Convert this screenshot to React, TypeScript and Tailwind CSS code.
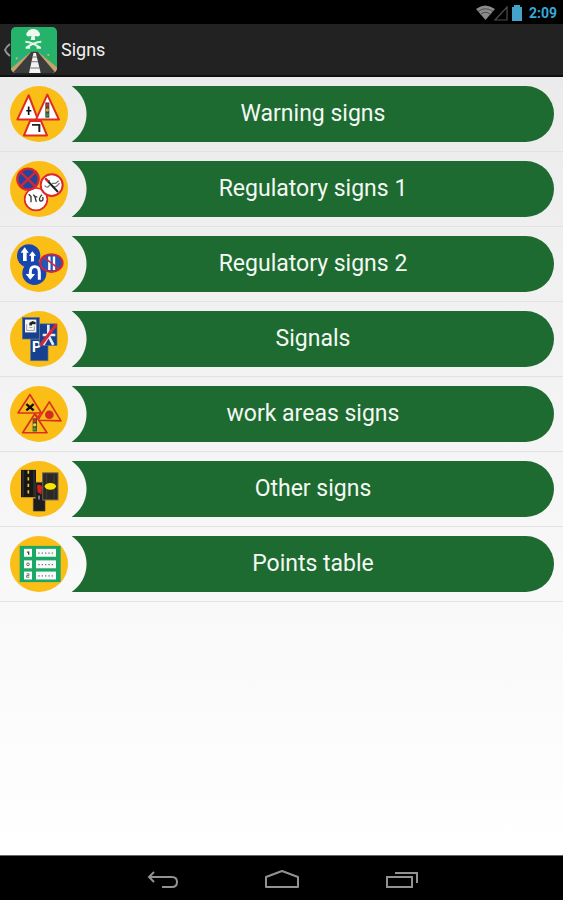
import type { ReactNode } from "react";

const WarningIcon = () => (
  <g transform="translate(0 4)">
    {[
      "M84 58 L112 132 H50 Z",
      "M140 56 L175 132 H106 Z",
      "M88 136 H121 L139 180 H70 Z",
    ].map((d) => (
      <path
        key={d}
        d={d}
        fill="#fff"
        stroke="#df2b22"
        strokeWidth="6"
        strokeLinejoin="round"
      />
    ))}
    <path d="M84 92 V118 M77 105 H92" stroke="#111" strokeWidth="5" />
    <rect x="134" y="80" width="12" height="46" fill="#444" />
    <circle cx="140" cy="88" r="5" fill="#d9281f" />
    <circle cx="140" cy="103" r="5" fill="#e8a32a" />
    <circle cx="140" cy="118" r="5" fill="#2d9447" />
    <path d="M94 148 H116 V170" fill="none" stroke="#222" strokeWidth="6" />
  </g>
);

const RegulatoryOneIcon = () => (
  <>
    <circle cx="106" cy="150" r="34" fill="#fff" stroke="#e3262b" strokeWidth="5" />
    <path
      d="M84 135 L91 142 V159 M98 136 L103 143 H110 M102 139 L107 158 M124 136 Q112 149 119 156 Q130 156 126 143"
      fill="none"
      stroke="#333"
      strokeWidth="4"
    />
    <circle cx="82" cy="89" r="32" fill="#25459b" stroke="#d92632" strokeWidth="7" />
    <path d="M60 68 L104 111 M104 68 L60 111" stroke="#d92632" strokeWidth="7" />
    <circle cx="153" cy="107" r="33" fill="#fff" stroke="#e3262b" strokeWidth="6" />
    <path
      d="M132 109 Q140 119 147 107 M154 102 H165 L174 94 M155 112 Q169 115 176 101 M139 94 H148"
      fill="none"
      stroke="#777"
      strokeWidth="4"
    />
    <path d="M134 87 L172 128" stroke="#222" strokeWidth="6" />
    <path d="M134 87 L143 97" stroke="#e3262b" strokeWidth="6" />
  </>
);

const RegulatoryTwoIcon = () => (
  <>
    <circle cx="84" cy="94" r="35" fill="#1746ae" />
    <path d="M72 68 L84 85 H78 V110 H67 V85 H60 Z" fill="#fff" />
    <path d="M95 80 L106 94 H100 V113 H91 V94 H85 Z" fill="#fff" />
    <circle cx="101" cy="147" r="36" fill="#1746ae" />
    <path
      d="M116 167 V145 Q116 127 102 127 Q89 127 89 145 V150"
      fill="none"
      stroke="#fff"
      strokeWidth="9"
    />
    <path d="M75 149 H103 L89 167 Z" fill="#fff" />
    <ellipse cx="152" cy="116" rx="34" ry="27" fill="#2856b5" stroke="#d72335" strokeWidth="6" />
    <path d="M146 96 V137 M160 96 V137" stroke="#fff" strokeWidth="7" />
    <path d="M129 98 L175 134" stroke="#d72335" strokeWidth="5" />
  </>
);

const SignalsIcon = () => (
  <>
    <rect x="90" y="119" width="52" height="66" fill="#17408e" stroke="#5c7695" strokeWidth="2" />
    <text
      x="94"
      y="159"
      fill="#fff"
      fontSize="42"
      fontWeight="700"
      fontFamily="Roboto, sans-serif"
    >
      P
    </text>
    <rect x="117" y="73" width="52" height="66" fill="#17408e" stroke="#5c7695" strokeWidth="2" />
    <path d="M143 76 V110 L128 137 M144 110 L158 137 M126 107 H164" fill="none" stroke="#e8edf4" strokeWidth="8" />
    <path d="M167 75 L120 138" stroke="#dc2637" strokeWidth="9" />
    <rect x="65" y="54" width="51" height="65" fill="#17408e" stroke="#5c7695" strokeWidth="2" />
    <rect x="73" y="60" width="34" height="39" fill="#f4f4f4" />
    <path d="M86 70 L96 64 L105 68 V74 H94 V78 H86 Z" fill="#222" />
    <path d="M78 74 V93 H101 V80 M86 84 H95" fill="none" stroke="#777" strokeWidth="2" />
  </>
);

const WorkAreasIcon = () => (
  <>
    {[
      "M88 60 L122 116 H52 Z",
      "M146 82 L181 140 L111 138 Z",
      "M102 119 L139 176 H66 Z",
    ].map((d) => (
      <path
        key={d}
        d={d}
        fill="#f5bc1c"
        stroke="#d9301d"
        strokeWidth="5"
        strokeLinejoin="round"
      />
    ))}
    <path d="M77 89 L99 108 M99 89 L77 108" stroke="#111" strokeWidth="7" />
    <circle cx="146" cy="121" r="13" fill="#d52b20" />
    <rect x="96" y="132" width="13" height="40" fill="#4c4a2b" />
    <circle cx="102" cy="139" r="5" fill="#d9301d" />
    <circle cx="102" cy="152" r="5" fill="#f2d13a" />
    <circle cx="102" cy="165" r="5" fill="#3c9c3f" />
    <path d="M103 119 L113 128 L119 114" fill="none" stroke="#d9301d" strokeWidth="4" />
  </>
);

const OtherIcon = () => (
  <>
    <path d="M61 61 H106 V144 H61 Z" fill="#161616" />
    <path d="M83 63 V142" stroke="#f4c02c" strokeWidth="5" strokeDasharray="10 10" />
    <path d="M67 63 V142 M100 63 V142" stroke="#55575a" strokeWidth="2" />
    <path d="M105 99 H128 V153 H133 V186 H98 V148 H105 Z" fill="#1d1d1f" stroke="#4c4740" strokeWidth="2" />
    <rect x="126" y="70" width="46" height="82" fill="#2c2925" stroke="#67635c" strokeWidth="3" />
    <path d="M138 75 V147 M160 75 V147" stroke="#504b43" strokeWidth="2" />
    <ellipse cx="149" cy="111" rx="17" ry="10" fill="#f7e700" />
    <path d="M109 108 Q119 102 124 112 L122 136 L111 128 Z" fill="#df211d" />
    <path d="M115 139 V151" stroke="#d8d8d8" strokeWidth="3" />
  </>
);

const PointsIcon = () => (
  <>
    <rect x="57" y="64" width="123" height="110" fill="#1ba766" />
    {[73, 108, 142].map((y) => (
      <g key={y}>
        <rect x="70" y={y} width="24" height="24" fill="#f7faf8" />
        <rect x="106" y={y} width="60" height="24" fill="#f7faf8" />
        <path
          d={`M113 ${y + 13} H160`}
          stroke="#777"
          strokeWidth="4"
          strokeDasharray="4 6"
        />
      </g>
    ))}
    <path d="M79 83 H84 V91" fill="none" stroke="#444" strokeWidth="4" />
    <circle cx="82" cy="120" r="4" fill="none" stroke="#666" strokeWidth="3" />
    <path d="M78 149 H85 V154 H78 V159 H86" fill="none" stroke="#777" strokeWidth="3" />
  </>
);

const categories: { name: string; icon: ReactNode }[] = [
  { name: "Warning signs", icon: <WarningIcon /> },
  { name: "Regulatory signs 1", icon: <RegulatoryOneIcon /> },
  { name: "Regulatory signs 2", icon: <RegulatoryTwoIcon /> },
  { name: "Signals", icon: <SignalsIcon /> },
  { name: "work areas signs", icon: <WorkAreasIcon /> },
  { name: "Other signs", icon: <OtherIcon /> },
  { name: "Points table", icon: <PointsIcon /> },
];

const CategoryRow = ({ name, icon }: { name: string; icon: ReactNode }) => {
  return (
    <li className="flex items-center gap-1 border-b border-[#e2e2e2] py-[9px] pr-[9px] pl-[10px]">
      <svg
        viewBox="28 34 174 170"
        preserveAspectRatio="none"
        className="h-14 w-[58px] shrink-0"
        aria-hidden="true"
      >
        <ellipse cx="115" cy="119" rx="87" ry="85" fill="#fabe17" />
        {icon}
      </svg>
      <button
        type="button"
        className="h-14 flex-1 rounded-r-full bg-[radial-gradient(circle_at_-19px_50%,transparent_33px,#1d6b30_34px)] text-center text-[23px] text-[#f4f8f4]"
      >
        {name}
      </button>
    </li>
  );
};

const StatusBar = () => (
  <div className="flex h-6 items-center justify-end bg-black pt-px pr-[6px] text-[#35a9d8]">
    <svg viewBox="0 0 54 20" className="h-5 w-[54px]" aria-hidden="true">
      <path d="M1 6 Q10 -1 20 6 L10.500 17 Z" fill="#8b8b8b" />
      <path d="M3 8.500 Q10.500 3 18 8.500 M5.500 11.500 Q10.500 7 15.500 11.500" fill="none" stroke="#4b4b4b" strokeWidth="1" />
      <path d="M32 4 V17 H20 Z" fill="none" stroke="#4d4d4d" strokeWidth="1.200" />
      <path d="M39 2 H45 V4 H47 V18 H37 V4 H39 Z" fill="#43a3cb" />
    </svg>
    <time className="text-sm font-bold">2:09</time>
  </div>
);

const AppIcon = () => (
  <svg viewBox="0 0 135 135" className="size-[46px]" aria-hidden="true">
    <defs>
      <clipPath id="app-icon">
        <rect width="135" height="135" rx="14" />
      </clipPath>
    </defs>
    <g clipPath="url(#app-icon)">
      <rect width="135" height="135" fill="#25b36c" />
      <path d="M54 76 L0 122 V135 H135 V118 L84 76 Z" fill="#c8a16a" />
      <path d="M60 73 L5 135 H131 L78 73 Z" fill="#3d3c3d" />
      <path d="M66 76 H73 L87 135 H53 Z" fill="#f3f3f3" />
      <path d="M62 88 H77 M60 102 H79 M57 120 H83" stroke="#777" strokeWidth="3" />
      <g fill="#edf9ef">
        <ellipse cx="65" cy="17" rx="17" ry="11" />
        <circle cx="52" cy="21" r="7" />
        <circle cx="78" cy="21" r="7" />
        <path d="M61 23 H69 L71 38 H58 Z" />
      </g>
      <path
        d="M42 43 Q62 44 84 60 M89 43 Q68 44 46 60 M43 61 H56 M75 61 H88"
        fill="none"
        stroke="#e5f5e8"
        strokeWidth="6"
      />
      <path d="M18 97 H23 M28 84 H33 M98 71 H104" stroke="#438ee0" strokeWidth="6" />
      <path d="M14 92 H19 M107 82 H112" stroke="#e7c04e" strokeWidth="5" />
    </g>
  </svg>
);

const ActionBar = () => (
  <header className="flex h-[53px] items-center border-b-2 border-[#101010] bg-[#222] pl-1">
    <button type="button" aria-label="Navigate up" className="flex items-center">
      <svg viewBox="0 0 7 16" className="h-4 w-[7px]" aria-hidden="true">
        <path d="M6 2 Q2 5 1 8 Q2 11 6 14" fill="none" stroke="#949494" strokeWidth="2" />
      </svg>
      <AppIcon />
    </button>
    <h1 className="ml-1 pt-px text-lg text-[#f0f0f0]">Signs</h1>
  </header>
);

const NavigationBar = () => (
  <nav className="flex h-[45px] items-center justify-center gap-[86px] border-t border-[#666] bg-black pt-[3px]">
    <button type="button" aria-label="Back">
      <svg viewBox="0 0 34 20" className="h-5 w-[34px]" aria-hidden="true">
        <path
          d="M9 2 L4 7 L9 12 M4 7 H27 Q32 7 32 12 Q32 17 27 17 H17"
          fill="none"
          stroke="#929292"
          strokeWidth="2"
        />
      </svg>
    </button>
    <button type="button" aria-label="Home">
      <svg viewBox="0 0 34 20" className="h-5 w-[34px]" aria-hidden="true">
        <path
          d="M1 17 V7 L17 1 L33 7 V17 Z"
          fill="none"
          stroke="#929292"
          strokeWidth="2"
          strokeLinejoin="round"
        />
      </svg>
    </button>
    <button type="button" aria-label="Recent apps">
      <svg viewBox="0 0 34 20" className="h-5 w-[34px]" aria-hidden="true">
        <path
          d="M2 7 H27 V17 H2 Z M10 3 H32 V13"
          fill="none"
          stroke="#929292"
          strokeWidth="2"
        />
      </svg>
    </button>
  </nav>
);

export default function App() {
  return (
    <div className="flex min-h-screen flex-col font-[Roboto,sans-serif]">
      <StatusBar />
      <ActionBar />
      <main className="flex-1 bg-linear-to-b from-[#ebebeb] to-white">
        <ul>
          {categories.map((category) => (
            <CategoryRow key={category.name} {...category} />
          ))}
        </ul>
      </main>
      <NavigationBar />
    </div>
  );
}
